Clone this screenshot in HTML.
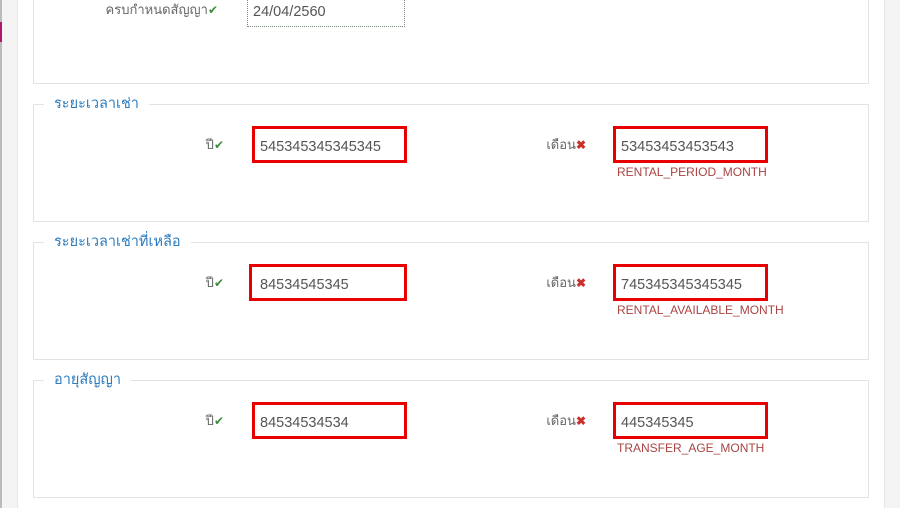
<!DOCTYPE html>
<html><head><meta charset="utf-8"><style>
body{margin:0;width:900px;height:508px;overflow:hidden;background:#fff;font-family:"Liberation Sans","Noto Sans CJK SC",sans-serif;position:relative}
.a{position:absolute}
.box{position:absolute;left:33px;width:834px;border:1px solid #e3e3e3;background:#fff}
.lg{position:absolute;left:44px;background:#fff;padding:0 10px;color:#2a7bbf;font-size:14.5px;line-height:20px}
.lbl{position:absolute;font-size:13px;color:#666;text-align:right;line-height:18px}
.inp{position:absolute;height:31px;border:3px solid #e80000;box-sizing:content-box;font-size:14.5px;color:#555;line-height:37px;padding-left:5px;width:144px;overflow:hidden}
.err{position:absolute;font-size:12px;color:#a94442;line-height:14px}
.ok{color:#3c8c3c;font-size:12px}
.x{color:#c9302c;font-size:12px;font-weight:bold}
</style></head><body>
<div class="a" style="left:0;top:0;width:17px;height:508px;background:#f4f4f4;border-right:1px solid #e6e6e6"></div>
<div class="a" style="left:0;top:0;width:2px;height:508px;background:#bbb"></div>
<div class="a" style="left:0;top:22px;width:2px;height:20px;background:#b0186a"></div>
<div class="a" style="left:884px;top:0;width:16px;height:508px;background:#f4f4f4;border-left:1px solid #e6e6e6"></div>

<div class="box" style="top:-5px;height:87px"></div>
<div class="lbl" style="left:80px;width:138px;top:1px">ครบกำหนดสัญญา<span class="ok">✔</span></div>
<div class="a" style="left:247px;top:-2px;width:158px;height:29px;border:1px dotted #7a8a7a;font-size:14.5px;color:#555;line-height:26px;padding-left:5px;box-sizing:border-box">24/04/2560</div>

<div class="box" style="top:104px;height:116px"></div>
<div class="lg" style="top:94px">ระยะเวลาเช่า</div>
<div class="lbl" style="left:150px;width:74px;top:136px">ปี<span class="ok">✔</span></div>
<div class="inp" style="left:252px;top:126px">545345345345345</div>
<div class="lbl" style="left:500px;width:86px;top:136px">เดือน<span class="x">✖</span></div>
<div class="inp" style="left:613px;top:126px">53453453453543</div>
<div class="err" style="left:617px;top:165px">RENTAL_PERIOD_MONTH</div>

<div class="box" style="top:242px;height:116px"></div>
<div class="lg" style="top:232px">ระยะเวลาเช่าที่เหลือ</div>
<div class="lbl" style="left:150px;width:74px;top:274px">ปี<span class="ok">✔</span></div>
<div class="inp" style="left:249px;top:264px;width:144px;padding-left:8px">84534545345</div>
<div class="lbl" style="left:500px;width:86px;top:274px">เดือน<span class="x">✖</span></div>
<div class="inp" style="left:613px;top:264px">745345345345345</div>
<div class="err" style="left:617px;top:303px">RENTAL_AVAILABLE_MONTH</div>

<div class="box" style="top:380px;height:116px"></div>
<div class="lg" style="top:370px">อายุสัญญา</div>
<div class="lbl" style="left:150px;width:74px;top:412px">ปี<span class="ok">✔</span></div>
<div class="inp" style="left:252px;top:402px">84534534534</div>
<div class="lbl" style="left:500px;width:86px;top:412px">เดือน<span class="x">✖</span></div>
<div class="inp" style="left:613px;top:402px">445345345</div>
<div class="err" style="left:617px;top:441px">TRANSFER_AGE_MONTH</div>
</body></html>
